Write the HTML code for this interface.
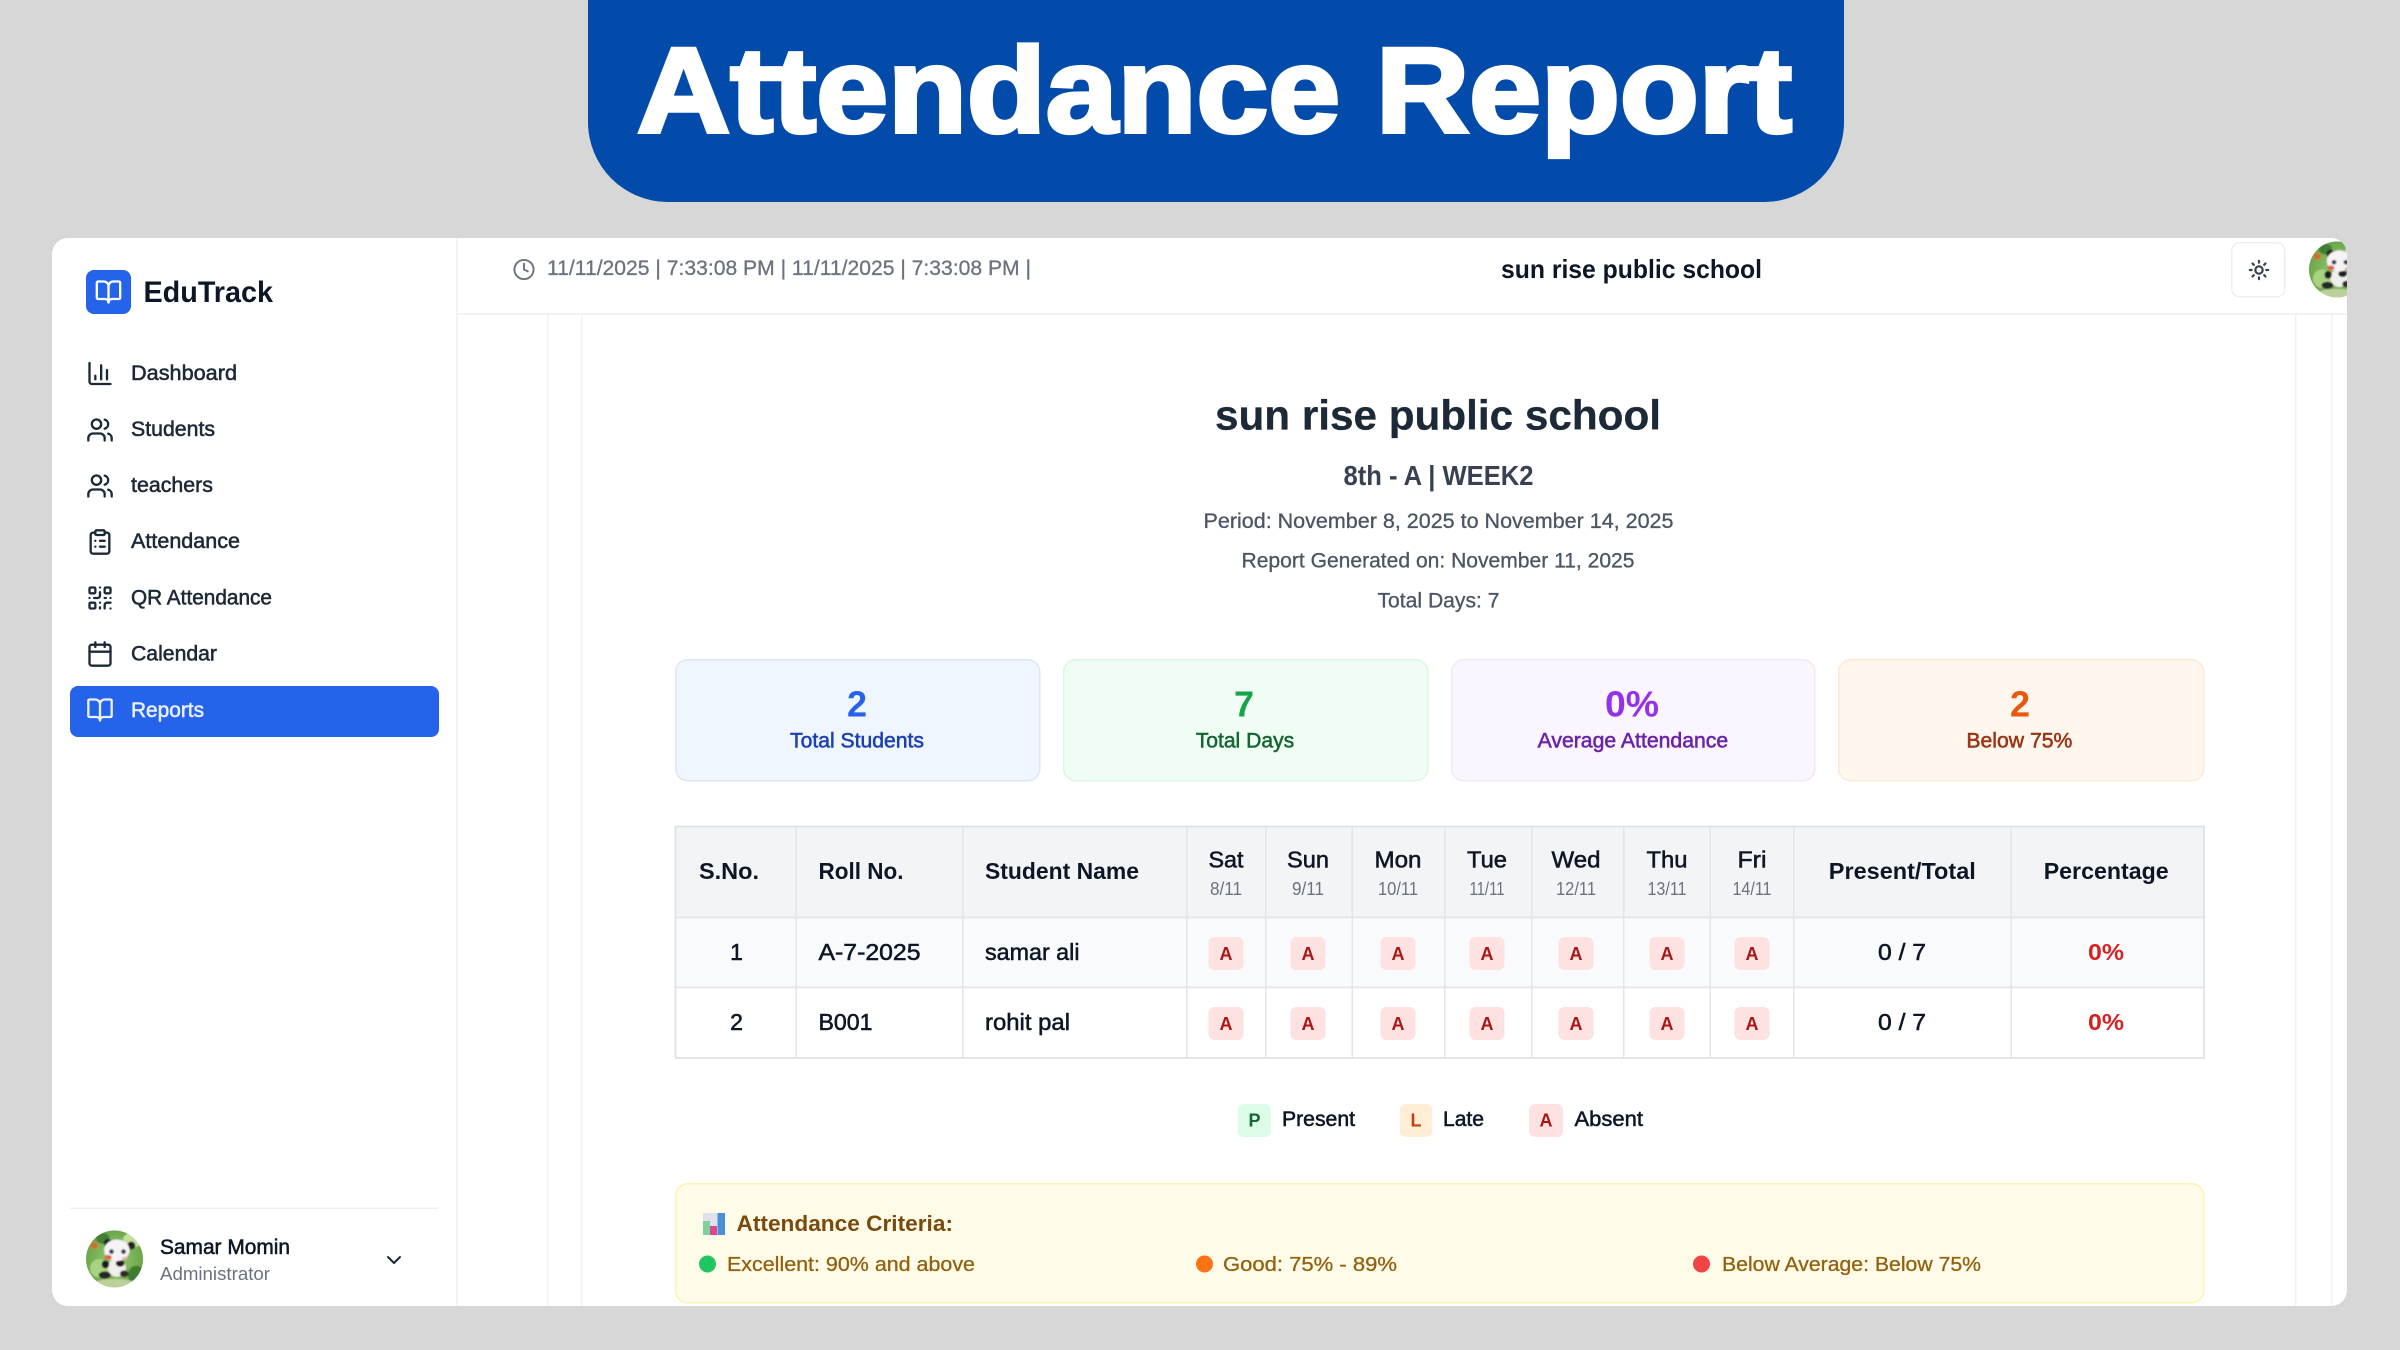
<!DOCTYPE html>
<html lang="en"><head><meta charset="utf-8"><title>Attendance Report</title>
<style>
html,body{margin:0;padding:0;background:#d7d7d7;width:2400px;height:1350px;overflow:hidden}
svg{display:block}
text{font-family:"Liberation Sans",sans-serif;white-space:pre}
.m{stroke-width:.55px}
.r{stroke-width:.3px}
.s{stroke-width:.9px}
.ic{fill:none;stroke-linecap:round;stroke-linejoin:round;stroke-width:2}
.soft{filter:url(#sf)}
</style></head>
<body>
<svg xmlns="http://www.w3.org/2000/svg" width="2400" height="1350" viewBox="0 0 2400 1350">
<defs>
<filter id="sf" x="0" y="0" width="100%" height="100%"><feGaussianBlur stdDeviation="0.35"/></filter>
<filter id="bl" x="-10%" y="-10%" width="120%" height="120%"><feGaussianBlur stdDeviation="2.5"/></filter>
<clipPath id="card"><rect x="52" y="238" width="2295" height="1068" rx="16"/></clipPath>
<clipPath id="av"><circle cx="105" cy="102" r="85"/></clipPath>
<radialGradient id="gg" cx="50%" cy="50%" r="55%"><stop offset="0" stop-color="#98c76f"/><stop offset=".7" stop-color="#6fa94e"/><stop offset="1" stop-color="#4f8f3a"/></radialGradient>
<symbol id="panda" viewBox="20 17 170 170">
<g clip-path="url(#av)"><g filter="url(#bl)">
<rect width="210" height="204" fill="url(#gg)"/>
<ellipse cx="160" cy="45" rx="30" ry="22" fill="#c3e09e"/>
<ellipse cx="60" cy="130" rx="28" ry="28" fill="#a9d382"/>
<ellipse cx="170" cy="150" rx="25" ry="28" fill="#3f7c32"/>
<ellipse cx="70" cy="40" rx="20" ry="16" fill="#437f35"/>
<ellipse cx="105" cy="175" rx="60" ry="14" fill="#bcd09a"/>
<circle cx="45" cy="62" r="10" fill="#d8672f"/>
<circle cx="85" cy="54" r="12" fill="#222"/>
<circle cx="155" cy="62" r="12" fill="#222"/>
<ellipse cx="112" cy="128" rx="27" ry="27" fill="#f1eeee"/>
<ellipse cx="78" cy="118" rx="11" ry="12" fill="#1c1c1c"/>
<ellipse cx="122" cy="115" rx="13" ry="10" fill="#1c1c1c"/>
<ellipse cx="76" cy="150" rx="18" ry="11" fill="#252525"/>
<ellipse cx="134" cy="146" rx="13" ry="10" fill="#332a2a"/>
<ellipse cx="112" cy="76" rx="38" ry="32" fill="#f5f3f5"/>
<circle cx="96" cy="80" r="7" fill="#34344a"/>
<circle cx="132" cy="80" r="7" fill="#34344a"/>
<ellipse cx="86" cy="97" rx="11" ry="7" fill="#e0614e"/>
<ellipse cx="136" cy="100" rx="8" ry="4" fill="#e9b0a8"/>
</g></g>
</symbol>
<symbol id="users" viewBox="0 0 24 24"><path d="M16 21v-2a4 4 0 0 0-4-4H6a4 4 0 0 0-4 4v2"/><circle cx="9" cy="7" r="4"/><path d="M22 21v-2a4 4 0 0 0-3-3.87"/><path d="M16 3.13a4 4 0 0 1 0 7.75"/></symbol>
<symbol id="book" viewBox="0 0 24 24"><path d="M12 7v14"/><path d="M3 18a1 1 0 0 1-1-1V4a1 1 0 0 1 1-1h5a4 4 0 0 1 4 4 4 4 0 0 1 4-4h5a1 1 0 0 1 1 1v13a1 1 0 0 1-1 1h-6a3 3 0 0 0-3 3 3 3 0 0 0-3-3z"/></symbol>
</defs>

<rect width="2400" height="1350" fill="#d7d7d7"/>

<!-- Title banner -->
<path d="M588 0H1844V122A80 80 0 0 1 1764 202H668A80 80 0 0 1 588 122Z" fill="#024baa"/>
<text x="637" y="132" font-size="121" font-weight="bold" fill="#fff" stroke="#fff" stroke-width="4" textLength="1155" lengthAdjust="spacingAndGlyphs">Attendance Report</text>

<!-- App card -->
<rect x="52" y="238" width="2295" height="1068" rx="16" fill="#fff"/>
<g clip-path="url(#card)">
<g class="soft">
<!-- structural lines -->
<rect x="456" y="238" width="1.5" height="1068" fill="#eef0f2"/>
<rect x="456" y="313" width="1891" height="1.5" fill="#eef0f2"/>
<rect x="547" y="314" width="1.5" height="992" fill="#f0f1f3"/>
<rect x="581" y="314" width="1.5" height="992" fill="#f0f1f3"/>
<rect x="2295" y="314" width="1.5" height="992" fill="#f0f1f3"/>
<rect x="2331" y="314" width="1.5" height="992" fill="#f0f1f3"/>

<!-- Sidebar -->
<rect x="86" y="270" width="45" height="44" rx="8" fill="#2563eb"/>
<use href="#book" x="94.5" y="278" width="28" height="28" class="ic" stroke="#fff" stroke-width="2"/>
<text x="143.5" y="302" font-size="29.5" font-weight="bold" fill="#111827" textLength="129.5" lengthAdjust="spacingAndGlyphs">EduTrack</text>

<g fill="#1f2937" font-size="21.4">
<text class="m" stroke="#1f2937" x="131" y="380" textLength="106" lengthAdjust="spacingAndGlyphs">Dashboard</text>
<text class="m" stroke="#1f2937" x="131" y="436" textLength="84" lengthAdjust="spacingAndGlyphs">Students</text>
<text class="m" stroke="#1f2937" x="131" y="492" textLength="82" lengthAdjust="spacingAndGlyphs">teachers</text>
<text class="m" stroke="#1f2937" x="131" y="548.2" textLength="109" lengthAdjust="spacingAndGlyphs">Attendance</text>
<text class="m" stroke="#1f2937" x="131" y="604.3" textLength="141" lengthAdjust="spacingAndGlyphs">QR Attendance</text>
<text class="m" stroke="#1f2937" x="131" y="660.5" textLength="86" lengthAdjust="spacingAndGlyphs">Calendar</text>
</g>
<g class="ic" stroke="#1f2937">
<svg x="86" y="359.5" width="28" height="28" viewBox="0 0 24 24"><path d="M3 3v16a2 2 0 0 0 2 2h16"/><path d="M18 17V9"/><path d="M13 17V5"/><path d="M8 17v-3"/></svg>
<use href="#users" x="86" y="416" width="28" height="28"/>
<use href="#users" x="86" y="472" width="28" height="28"/>
<svg x="86" y="528" width="28" height="28" viewBox="0 0 24 24"><rect x="8" y="2" width="8" height="4" rx="1"/><path d="M16 4h2a2 2 0 0 1 2 2v14a2 2 0 0 1-2 2H6a2 2 0 0 1-2-2V6a2 2 0 0 1 2-2h2"/><path d="M12 11h4"/><path d="M12 16h4"/><path d="M8 11h.01"/><path d="M8 16h.01"/></svg>
<svg x="86" y="584" width="28" height="28" viewBox="0 0 24 24"><rect x="3" y="3" width="5" height="5" rx="1"/><rect x="16" y="3" width="5" height="5" rx="1"/><rect x="3" y="16" width="5" height="5" rx="1"/><path d="M21 16h-3a2 2 0 0 0-2 2v3"/><path d="M21 21v.01"/><path d="M12 7v3a2 2 0 0 1-2 2H7"/><path d="M3 12h.01"/><path d="M12 3h.01"/><path d="M12 16v.01"/><path d="M16 12h1"/><path d="M21 12v.01"/><path d="M12 21v-1"/></svg>
<svg x="86" y="640" width="28" height="28" viewBox="0 0 24 24"><path d="M8 2v4"/><path d="M16 2v4"/><rect x="3" y="4" width="18" height="18" rx="2"/><path d="M3 10h18"/></svg>
</g>
<rect x="70" y="686" width="369" height="51" rx="8" fill="#2563eb"/>
<use href="#book" x="86" y="696" width="28" height="28" class="ic" stroke="#eaf1ff"/>
<text class="m" x="131" y="717" font-size="21.4" fill="#e8efff" stroke="#e8efff" textLength="73" lengthAdjust="spacingAndGlyphs">Reports</text>

<rect x="70" y="1207.5" width="368" height="1.5" fill="#eef0f2"/>
<use href="#panda" x="86" y="1230.5" width="57" height="57"/>
<text class="m" x="160" y="1254" font-size="21.4" fill="#111827" stroke="#111827" textLength="130" lengthAdjust="spacingAndGlyphs">Samar Momin</text>
<text x="160" y="1280" font-size="18.4" fill="#6b7280" textLength="110" lengthAdjust="spacingAndGlyphs">Administrator</text>
<svg x="382" y="1248" width="24" height="24" viewBox="0 0 24 24" class="ic" stroke="#1f2937"><path d="m6 9 6 6 6-6"/></svg>

<!-- Header -->
<svg x="512.5" y="258" width="23" height="23" viewBox="0 0 24 24" class="ic" stroke="#6b7280"><circle cx="12" cy="12" r="10"/><polyline points="12 6 12 12 16 14"/></svg>
<text class="r" x="547" y="275" font-size="21.4" fill="#6b7280" stroke="#6b7280" textLength="484" lengthAdjust="spacingAndGlyphs">11/11/2025 | 7:33:08 PM | 11/11/2025 | 7:33:08 PM |</text>
<text x="1501" y="278" font-size="26" font-weight="bold" fill="#111827" textLength="261" lengthAdjust="spacingAndGlyphs">sun rise public school</text>
<rect x="2231.75" y="242.75" width="53" height="54" rx="8" fill="#fff" stroke="#eceef0" stroke-width="1.5"/>
<svg x="2248" y="259" width="22" height="22" viewBox="0 0 24 24" class="ic" stroke="#374151" style="stroke-width:2.4"><circle cx="12" cy="12" r="4"/><path d="M12 2v2"/><path d="M12 20v2"/><path d="m4.93 4.93 1.41 1.41"/><path d="m17.66 17.66 1.41 1.41"/><path d="M2 12h2"/><path d="M20 12h2"/><path d="m6.34 17.66-1.41 1.41"/><path d="m19.07 4.93-1.41 1.41"/></svg>
<use href="#panda" x="2309" y="241.5" width="56" height="56"/>

<!-- Report heading -->
<text class="r" x="1215" y="429.3" font-size="41.5" font-weight="bold" fill="#1f2937" stroke="#1f2937" textLength="446" lengthAdjust="spacingAndGlyphs">sun rise public school</text>
<text x="1343.5" y="485" font-size="27.5" font-weight="bold" fill="#374151" textLength="190" lengthAdjust="spacingAndGlyphs">8th - A | WEEK2</text>
<g font-size="21.4" fill="#4b5563" stroke="#4b5563">
<text class="r" x="1203.5" y="528" textLength="470" lengthAdjust="spacingAndGlyphs">Period: November 8, 2025 to November 14, 2025</text>
<text class="r" x="1241.5" y="567.3" textLength="393" lengthAdjust="spacingAndGlyphs">Report Generated on: November 11, 2025</text>
<text class="r" x="1377.5" y="607.3" textLength="122" lengthAdjust="spacingAndGlyphs">Total Days: 7</text>
</g>

<!-- Stat cards -->
<rect x="675.75" y="659.75" width="364" height="121" rx="12" fill="#eff6ff" stroke="#dbe6f7" stroke-width="1.5"/>
<rect x="1063.75" y="659.75" width="364" height="121" rx="12" fill="#f0fdf4" stroke="#dcf5e4" stroke-width="1.5"/>
<rect x="1451.75" y="659.75" width="363" height="121" rx="12" fill="#faf5ff" stroke="#efe8f7" stroke-width="1.5"/>
<rect x="1838.75" y="659.75" width="365" height="121" rx="12" fill="#fff7ed" stroke="#fbe9d3" stroke-width="1.5"/>
<g font-size="36" font-weight="bold" text-anchor="middle">
<text x="857" y="716.7" fill="#2563eb">2</text>
<text x="1244" y="716.7" fill="#16a34a">7</text>
<text x="1632" y="716.7" fill="#9333ea" textLength="54" lengthAdjust="spacingAndGlyphs">0%</text>
<text x="2020" y="716.7" fill="#ea580c">2</text>
</g>
<g font-size="21.4">
<text class="m" x="790" y="747.7" fill="#1e40af" stroke="#1e40af" textLength="134" lengthAdjust="spacingAndGlyphs">Total Students</text>
<text class="m" x="1195.7" y="747.7" fill="#166534" stroke="#166534" textLength="98.5" lengthAdjust="spacingAndGlyphs">Total Days</text>
<text class="m" x="1537.6" y="747.7" fill="#6b21a8" stroke="#6b21a8" textLength="190.6" lengthAdjust="spacingAndGlyphs">Average Attendance</text>
<text class="m" x="1966.4" y="747.7" fill="#9a3412" stroke="#9a3412" textLength="106" lengthAdjust="spacingAndGlyphs">Below 75%</text>
</g>

<!-- Table -->
<rect x="675" y="826" width="1529" height="91" fill="#f3f4f6"/>
<rect x="675" y="917" width="1529" height="70" fill="#f9fafb"/>
<rect x="675" y="987" width="1529" height="71" fill="#fff"/>
<g fill="#e3e5e9">
<rect x="795.5" y="826" width="1.5" height="232"/>
<rect x="962" y="826" width="1.5" height="232"/>
<rect x="1186" y="826" width="1.5" height="232"/>
<rect x="1265" y="826" width="1.5" height="232"/>
<rect x="1351.5" y="826" width="1.5" height="232"/>
<rect x="1444" y="826" width="1.5" height="232"/>
<rect x="1531" y="826" width="1.5" height="232"/>
<rect x="1623" y="826" width="1.5" height="232"/>
<rect x="1709.5" y="826" width="1.5" height="232"/>
<rect x="1793" y="826" width="1.5" height="232"/>
<rect x="2010.5" y="826" width="1.5" height="232"/>
<rect x="675" y="916.5" width="1529" height="1.8"/>
<rect x="675" y="986.5" width="1529" height="1.8"/>
</g>
<rect x="675.5" y="826.5" width="1528.5" height="231.5" fill="none" stroke="#dcdfe3" stroke-width="1.6"/>

<g font-size="23" font-weight="bold" fill="#111827">
<text x="699" y="879" textLength="60" lengthAdjust="spacingAndGlyphs">S.No.</text>
<text x="818.5" y="879" textLength="85" lengthAdjust="spacingAndGlyphs">Roll No.</text>
<text x="985" y="879" textLength="154" lengthAdjust="spacingAndGlyphs">Student Name</text>
<text x="1828.8" y="879" textLength="147" lengthAdjust="spacingAndGlyphs">Present/Total</text>
<text x="2043.7" y="879" textLength="125" lengthAdjust="spacingAndGlyphs">Percentage</text>
</g>
<g font-size="23" fill="#111827" stroke="#111827" text-anchor="middle">
<text class="m" x="1226" y="867.7" textLength="35" lengthAdjust="spacingAndGlyphs">Sat</text>
<text class="m" x="1308" y="867.7" textLength="42" lengthAdjust="spacingAndGlyphs">Sun</text>
<text class="m" x="1398" y="867.7" textLength="47" lengthAdjust="spacingAndGlyphs">Mon</text>
<text class="m" x="1487" y="867.7" textLength="40" lengthAdjust="spacingAndGlyphs">Tue</text>
<text class="m" x="1576" y="867.7" textLength="49" lengthAdjust="spacingAndGlyphs">Wed</text>
<text class="m" x="1667" y="867.7" textLength="41" lengthAdjust="spacingAndGlyphs">Thu</text>
<text class="m" x="1752" y="867.7" textLength="29" lengthAdjust="spacingAndGlyphs">Fri</text>
</g>
<g font-size="18" fill="#6b7280" text-anchor="middle">
<text x="1226" y="895" textLength="32" lengthAdjust="spacingAndGlyphs">8/11</text>
<text x="1308" y="895" textLength="32" lengthAdjust="spacingAndGlyphs">9/11</text>
<text x="1398" y="895" textLength="40" lengthAdjust="spacingAndGlyphs">10/11</text>
<text x="1487" y="895" textLength="35" lengthAdjust="spacingAndGlyphs">11/11</text>
<text x="1576" y="895" textLength="40" lengthAdjust="spacingAndGlyphs">12/11</text>
<text x="1667" y="895" textLength="39" lengthAdjust="spacingAndGlyphs">13/11</text>
<text x="1752" y="895" textLength="39" lengthAdjust="spacingAndGlyphs">14/11</text>
</g>
<g font-size="23" fill="#111827" stroke="#111827">
<text class="m" x="736.5" y="960" text-anchor="middle">1</text>
<text class="m" x="818.5" y="960" textLength="102" lengthAdjust="spacingAndGlyphs">A-7-2025</text>
<text class="m" x="985" y="960" textLength="94.5" lengthAdjust="spacingAndGlyphs">samar ali</text>
<text class="m" x="1878" y="960" textLength="48" lengthAdjust="spacingAndGlyphs">0 / 7</text>
<text class="m" x="736.5" y="1030" text-anchor="middle">2</text>
<text class="m" x="818.5" y="1030" textLength="54" lengthAdjust="spacingAndGlyphs">B001</text>
<text class="m" x="985" y="1030" textLength="85" lengthAdjust="spacingAndGlyphs">rohit pal</text>
<text class="m" x="1878" y="1030" textLength="48" lengthAdjust="spacingAndGlyphs">0 / 7</text>
</g>
<g font-size="23" font-weight="bold" fill="#d42020">
<text x="2088" y="960" textLength="36" lengthAdjust="spacingAndGlyphs">0%</text>
<text x="2088" y="1030" textLength="36" lengthAdjust="spacingAndGlyphs">0%</text>
</g>
<g fill="#fee2e2">
<rect x="1208.5" y="937" width="35" height="33" rx="6"/><rect x="1290.5" y="937" width="35" height="33" rx="6"/><rect x="1380.5" y="937" width="35" height="33" rx="6"/><rect x="1469.5" y="937" width="35" height="33" rx="6"/><rect x="1558.5" y="937" width="35" height="33" rx="6"/><rect x="1649.5" y="937" width="35" height="33" rx="6"/><rect x="1734.5" y="937" width="35" height="33" rx="6"/>
<rect x="1208.5" y="1007" width="35" height="33" rx="6"/><rect x="1290.5" y="1007" width="35" height="33" rx="6"/><rect x="1380.5" y="1007" width="35" height="33" rx="6"/><rect x="1469.5" y="1007" width="35" height="33" rx="6"/><rect x="1558.5" y="1007" width="35" height="33" rx="6"/><rect x="1649.5" y="1007" width="35" height="33" rx="6"/><rect x="1734.5" y="1007" width="35" height="33" rx="6"/>
</g>
<g font-size="18" font-weight="bold" fill="#a81616" text-anchor="middle">
<text x="1226" y="960">A</text><text x="1308" y="960">A</text><text x="1398" y="960">A</text><text x="1487" y="960">A</text><text x="1576" y="960">A</text><text x="1667" y="960">A</text><text x="1752" y="960">A</text>
<text x="1226" y="1030">A</text><text x="1308" y="1030">A</text><text x="1398" y="1030">A</text><text x="1487" y="1030">A</text><text x="1576" y="1030">A</text><text x="1667" y="1030">A</text><text x="1752" y="1030">A</text>
</g>

<!-- Legend -->
<rect x="1238" y="1104" width="33" height="33" rx="6" fill="#dcfce7"/>
<rect x="1400" y="1104" width="32" height="33" rx="6" fill="#ffedd5"/>
<rect x="1529" y="1104" width="34" height="33" rx="6" fill="#fee2e2"/>
<g font-size="18" font-weight="bold" text-anchor="middle">
<text x="1254.5" y="1126.5" fill="#166534">P</text>
<text x="1416" y="1126.5" fill="#c2410c">L</text>
<text x="1546" y="1126.5" fill="#a81616">A</text>
</g>
<g font-size="21.4" fill="#111827" stroke="#111827">
<text class="m" x="1282" y="1126" textLength="73" lengthAdjust="spacingAndGlyphs">Present</text>
<text class="m" x="1443" y="1126" textLength="41" lengthAdjust="spacingAndGlyphs">Late</text>
<text class="m" x="1574.5" y="1126" textLength="68.5" lengthAdjust="spacingAndGlyphs">Absent</text>
</g>

<!-- Criteria -->
<rect x="675.75" y="1183.75" width="1528" height="119" rx="12" fill="#fefce8" stroke="#fdf3b0" stroke-width="1.5"/>
<rect x="703" y="1213" width="22" height="22" fill="#dfe2ea"/>
<rect x="703" y="1221" width="7" height="14" fill="#7fd0a0"/>
<rect x="710" y="1226" width="7" height="9" fill="#dd4a8e"/>
<rect x="717.5" y="1213" width="7.5" height="22" fill="#4b8fd8"/>
<text x="736.5" y="1231" font-size="22" font-weight="bold" fill="#7a4a0c" textLength="216.5" lengthAdjust="spacingAndGlyphs">Attendance Criteria:</text>
<circle cx="707.5" cy="1264" r="8.5" fill="#22c55e"/>
<circle cx="1204.5" cy="1264" r="8.5" fill="#f97316"/>
<circle cx="1701.5" cy="1264" r="8.5" fill="#ef4444"/>
<g font-size="20.5" fill="#946110" stroke="#946110">
<text class="r" x="727" y="1271" textLength="248" lengthAdjust="spacingAndGlyphs">Excellent: 90% and above</text>
<text class="r" x="1223" y="1271" textLength="174" lengthAdjust="spacingAndGlyphs">Good: 75% - 89%</text>
<text class="r" x="1722" y="1271" textLength="259" lengthAdjust="spacingAndGlyphs">Below Average: Below 75%</text>
</g>
</g>
</g>
</svg>
</body></html>
